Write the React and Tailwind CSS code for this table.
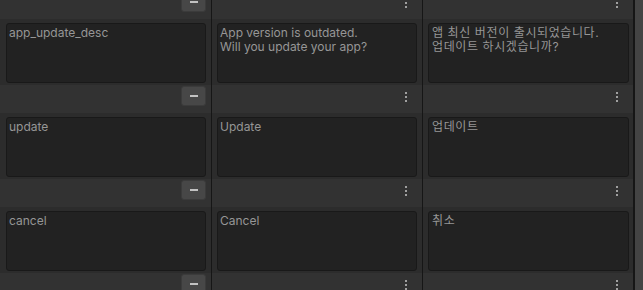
import React from 'react';

const rows = [
  { key: '', en: '', ko: '' },
  { key: 'app_update_desc', en: 'App version is outdated.\nWill you update your app?', ko: '앱 최신 버전이 출시되었습니다.\n업데이트 하시겠습니까?' },
  { key: 'update', en: 'Update', ko: '업데이트' },
  { key: 'cancel', en: 'Cancel', ko: '취소' },
];

function Kebab() {
  return (
    <svg width="4" height="10" viewBox="0 0 4 10" className="block">
      <rect x="1" y="0" width="2" height="2" fill="#a0a0a0" />
      <rect x="1" y="4" width="2" height="2" fill="#a0a0a0" />
      <rect x="1" y="8" width="2" height="2" fill="#a0a0a0" />
    </svg>
  );
}

function MinusButton() {
  return (
    <button className="w-[25px] h-[20px] rounded-[3px] bg-[#474747] border border-[#3b3b3b] flex items-center justify-center">
      <span className="block w-[8px] h-[2px] bg-[#c2c2c2]" />
    </button>
  );
}

function Cell({ text, first, last, action, korean }) {
  const pad = first ? 'pl-[6px] pr-[5px]' : last ? 'pl-[5px] pr-[4px]' : 'px-[5px]';
  return (
    <div className={`flex flex-col border-r border-[#161616] bg-[#323232] overflow-hidden ${pad}`}>
      <div className="h-[66px] pt-[4px] bg-[#2c2c2c] -mx-[6px] px-[6px]">
        <div
          className={`h-[60px] rounded-[3px] bg-[#222222] border border-[#191919] pt-[2px] text-[12px] leading-[14px] text-[#969696] whitespace-pre-line ${korean ? 'px-[3px] tracking-[0.6px]' : 'pl-[2px] pr-[3px]'}`}
          style={{ fontFamily: 'Inter, "Noto Sans CJK KR", sans-serif' }}
        >
          {text}
        </div>
      </div>
      <div className="h-[28px] pt-[1px] flex justify-end">
        {action === 'minus' ? (
          <MinusButton />
        ) : (
          <div className={`pt-[6px] ${last ? 'pr-[10px]' : 'pr-[9px]'}`}>
            <Kebab />
          </div>
        )}
      </div>
    </div>
  );
}

export default function App() {
  return (
    <div className="w-[643px] h-[290px] overflow-hidden bg-[#323232] flex">
      <div className="w-[634px] -mt-[75px] flex flex-col">
        {rows.map((r, i) => (
          <div key={i} className="grid grid-cols-[212px_211px_211px] h-[94px] shrink-0">
            <Cell text={r.key} action="minus" first />
            <Cell text={r.en} action="kebab" />
            <Cell text={r.ko} action="kebab" korean last />
          </div>
        ))}
      </div>
      <div className="flex-1 bg-[#444444] border-l border-[#161616]" />
    </div>
  );
}
